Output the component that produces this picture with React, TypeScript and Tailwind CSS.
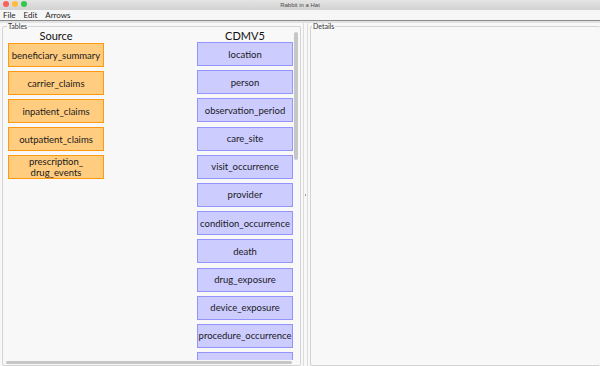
import React from "react";

const sourceTables = [
  "beneficiary_summary",
  "carrier_claims",
  "inpatient_claims",
  "outpatient_claims",
  "prescription_\ndrug_events",
];

const cdmTables = [
  "location",
  "person",
  "observation_period",
  "care_site",
  "visit_occurrence",
  "provider",
  "condition_occurrence",
  "death",
  "drug_exposure",
  "device_exposure",
  "procedure_occurrence",
  "specimen",
];

function TableBox({ name, kind }: { name: string; kind: "source" | "cdm" }) {
  const cls =
    kind === "source"
      ? "bg-[#ffcc80] border-[#ff9a10]"
      : "bg-[#ccccff] border-[#9494ff]";
  return (
    <div
      className={`h-[24px] w-[96px] shrink-0 border flex items-center justify-center text-center whitespace-pre leading-[11px] text-[9.5px] text-[#1a1a1a] ${cls}`}
    >
      {name}
    </div>
  );
}

export default function App() {
  return (
    <div className="w-[600px] h-[366px] overflow-hidden bg-[#f6f6f6] flex flex-col font-['Lato',sans-serif]">
      {/* window title */}
      <div className="h-[10px] shrink-0 relative bg-gradient-to-b from-[#e4e4e4] to-[#d2d2d2] flex items-center justify-center">
        <div className="absolute left-[3px] top-[1px] flex gap-[3px]">
          <span className="w-[6px] h-[6px] rounded-full bg-[#fc605c]" />
          <span className="w-[6px] h-[6px] rounded-full bg-[#fdbc40]" />
          <span className="w-[6px] h-[6px] rounded-full bg-[#34c84a]" />
        </div>
        <span className="text-[6px] leading-none text-[#4a4a4a] font-['Liberation_Sans',sans-serif]">Rabbit in a Hat</span>
      </div>

      {/* menu */}
      <div className="h-[9px] shrink-0 bg-[#f6f6f6] flex items-center gap-[8px] px-[3px] text-[8px] leading-none text-[#222]">
        <span>File</span>
        <span>Edit</span>
        <span>Arrows</span>
      </div>
      <div className="h-[1px] shrink-0 bg-[#f6f6f6]" />
      <div className="h-[1px] shrink-0 bg-[#8c8c8c]" />
      <div className="h-[2px] shrink-0 bg-[#e2e2e2]" />

      {/* main split */}
      <div className="flex-1 flex bg-[#f8f8f8] pl-[2px]">
        <fieldset className="w-[299px] shrink-0 border border-[#d4d4d4] rounded-[2px] pl-[3px] pr-[1px]">
          <legend className="text-[7px] leading-none text-[#333] ml-[1px] px-[1px]">Tables</legend>
          <div className="flex h-[330px] overflow-hidden">
            <div className="flex-1 flex">
              <div className="w-[96px] ml-[2px] flex flex-col">
                <div className="h-[12px] text-[11px] leading-none text-center text-[#111]">Source</div>
                <div className="flex flex-col gap-[4px] mt-[1px]">
                  {sourceTables.map((t) => (
                    <TableBox key={t} name={t} kind="source" />
                  ))}
                </div>
              </div>
              <div className="w-[96px] ml-[93px] flex flex-col">
                <div className="h-[12px] text-[11px] leading-none text-center text-[#111]">CDMV5</div>
                <div className="flex flex-col gap-[4.2px] mt-[1px]">
                  {cdmTables.map((t, i) => (
                    <TableBox key={t} name={i < 11 ? t : ""} kind="cdm" />
                  ))}
                </div>
              </div>
            </div>
            {/* vertical scrollbar */}
            <div className="w-[5px] ml-[1px] pt-[2px]">
              <div className="h-[128px] w-[4px] rounded-full bg-[#c6c6c6]" />
            </div>
          </div>
          {/* horizontal scrollbar */}
          <div className="mt-[1px] h-[3px] w-[286px] rounded-full bg-[#c6c6c6]" />
        </fieldset>

        {/* divider */}
        <div className="w-[9px] shrink-0 flex flex-col items-center justify-center">
          <div className="border-l border-r border-[#dcdcdc] w-[5px] h-full flex items-center justify-center">
            <span className="w-[1px] h-[2px] bg-[#9a9a9a]" />
          </div>
        </div>

        <fieldset className="flex-1 border border-[#d4d4d4] rounded-[2px] border-r-0">
          <legend className="text-[7px] leading-none text-[#333] ml-[1px] px-[1px]">Details</legend>
        </fieldset>
      </div>
    </div>
  );
}
